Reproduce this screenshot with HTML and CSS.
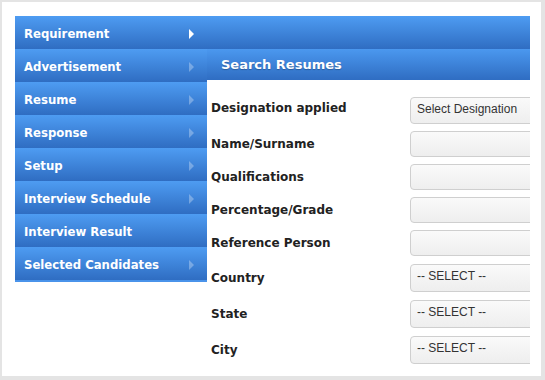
FILE: index.html
```html
<!DOCTYPE html>
<html>
  <head>
    <title>Search Resumes</title>
    <link rel="stylesheet" href="styles.css">
  </head>
  <body>
    <div class="frame">
      <div class="panel">
        <ul class="menu">
          <li><a class="menu-link">Requirement<span class="icon active"></span></a></li>
          <li><a class="menu-link">Advertisement<span class="icon"></span></a></li>
          <li><a class="menu-link">Resume<span class="icon"></span></a></li>
          <li><a class="menu-link">Response<span class="icon"></span></a></li>
          <li><a class="menu-link">Setup<span class="icon"></span></a></li>
          <li><a class="menu-link">Interview Schedule<span class="icon"></span></a></li>
          <li><a class="menu-link">Interview Result</a></li>
          <li><a class="menu-link">Selected Candidates<span class="icon"></span></a></li>
        </ul>
        <div class="main">
          <div class="topbar"></div>
          <h2 class="heading">Search Resumes</h2>
          <form class="search">
            <div class="row row-first">
              <label>Designation applied</label>
              <select class="field pick"><option>Select Designation</option></select>
            </div>
            <div class="row">
              <label>Name/Surname</label>
              <input class="field" type="text">
            </div>
            <div class="row">
              <label>Qualifications</label>
              <input class="field" type="text">
            </div>
            <div class="row">
              <label>Percentage/Grade</label>
              <input class="field" type="text">
            </div>
            <div class="row">
              <label>Reference Person</label>
              <input class="field" type="text">
            </div>
            <div class="row row-select">
              <label>Country</label>
              <select class="field choose"><option>-- SELECT --</option></select>
            </div>
            <div class="row row-select">
              <label>State</label>
              <select class="field choose"><option>-- SELECT --</option></select>
            </div>
            <div class="row row-select">
              <label>City</label>
              <select class="field choose"><option>-- SELECT --</option></select>
            </div>
          </form>
        </div>
      </div>
    </div>
  </body>
</html>
```

FILE: styles.css
```css
/* page frame */
body {
  margin: 0;
  background: #e4e4e4;
  font-family: "DejaVu Sans", Verdana, sans-serif;
}
.frame {
  margin: 2px 4px 0 2px;
  height: 374px;
  background: #fff;
  overflow: hidden;
}
.panel {
  display: flex;
  width: 515px;
  margin: 14px 0 0 13px;
}

/* left menu */
.menu {
  list-style: none;
  margin: 0;
  padding: 0;
  width: 192px;
  flex: none;
}
.menu-link {
  display: flex;
  align-items: center;
  justify-content: space-between;
  height: 33px;
  padding: 2px 13px 0 9px;
  box-sizing: border-box;
  background: linear-gradient(#4e9cf2, #2f6dc2);
  color: #fff;
  font-size: 11.7px;
  font-weight: bold;
  text-decoration: none;
  cursor: pointer;
}
.menu > li:last-child .menu-link {
  height: 35px;
  border-bottom: 2px solid #4a93ea;
}
.icon {
  width: 0;
  height: 0;
  border-top: 5px solid transparent;
  border-bottom: 5px solid transparent;
  border-left: 5px solid #fff;
  opacity: 0.3;
}
.icon.active {
  opacity: 1;
}

/* right side */
.main {
  flex: 1;
  overflow: hidden;
}
.topbar {
  height: 33px;
  background: linear-gradient(#4e9cf2, #2f6dc2);
}
.heading {
  margin: 0;
  height: 31px;
  padding-left: 14px;
  display: flex;
  align-items: center;
  background: linear-gradient(#4b98ef, #2f6dc2);
  color: #fff;
  font-size: 13px;
  font-weight: bold;
  text-shadow: 0 1px 1px rgba(0, 0, 0, 0.25);
}
.search {
  padding: 17px 0 0 4px;
}
.row {
  display: flex;
  align-items: center;
  margin-bottom: 7px;
}
.row-first label {
  padding-bottom: 6px;
}
.row-select {
  padding-top: 1px;
}
.row label {
  width: 199px;
  flex: none;
  color: #222;
  font-size: 12px;
  font-weight: bold;
}
.field {
  -webkit-appearance: none;
  appearance: none;
  box-sizing: border-box;
  width: 160px;
  flex: none;
  height: 26px;
  margin: 0;
  border: 1px solid #cfcfcf;
  border-radius: 4px;
  background: linear-gradient(#fafafa, #eeeeee);
  font-family: "Liberation Sans", Arial, sans-serif;
  font-size: 12px;
  color: #333;
  padding: 0 6px;
}
.pick {
  height: 27px;
  padding-bottom: 3px;
}
.choose {
  height: 28px;
  padding: 0 6px 4px;
}
```
